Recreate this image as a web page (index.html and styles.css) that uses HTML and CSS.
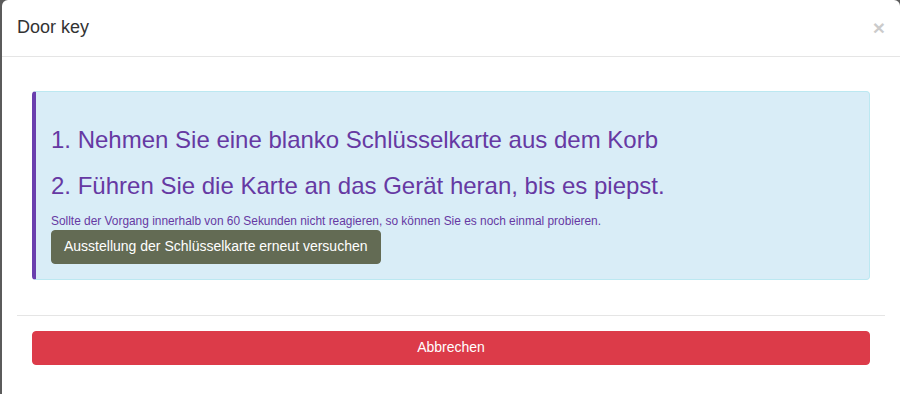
FILE: index.html
```html
<!DOCTYPE html>
<html lang="de">
<head>
<meta charset="utf-8">
<title>Door key</title>
<link rel="stylesheet" href="styles.css">
</head>
<body>
<div class="modal">
  <div class="modal-header">
    <button class="close" type="button" aria-label="Close">×</button>
    <h4 class="modal-title">Door key</h4>
  </div>
  <div class="modal-body">
    <div class="panel">
      <div class="alert">
        <h3 class="step">1. Nehmen Sie eine blanko Schlüsselkarte aus dem Korb</h3>
        <h3 class="step">2. Führen Sie die Karte an das Gerät heran, bis es piepst.</h3>
        <p class="hint"><small>Sollte der Vorgang innerhalb von 60 Sekunden nicht reagieren, so können Sie es noch einmal probieren.</small></p>
        <button class="btn btn-retry" type="button">Ausstellung der Schlüsselkarte erneut versuchen</button>
      </div>
    </div>
    <div class="separator"></div>
    <div class="actions">
      <button class="btn btn-cancel" type="button">Abbrechen</button>
    </div>
  </div>
</div>
</body>
</html>
```
FILE: styles.css
```css
html, body {
  margin: 0;
  padding: 0;
  height: 394px;
  overflow: hidden;
}
body {
  background: #5b5b5b;
  font-family: "Liberation Sans", Arial, sans-serif;
  font-size: 14px;
  line-height: 1.42857;
  color: #333;
}
.modal {
  margin-left: 2px;
  width: 898px;
  height: 420px;
  background: #fff;
  border-radius: 6px;
}
.modal-header {
  padding: 15px;
  border-bottom: 1px solid #e5e5e5;
}
.modal-title {
  margin: 0;
  font-size: 18px;
  font-weight: 500;
  line-height: 1.42857;
  color: #333;
}
.close {
  float: right;
  margin-top: 2px;
  padding: 0;
  border: 0;
  background: transparent;
  font-family: "Liberation Sans", Arial, sans-serif;
  font-size: 21px;
  font-weight: bold;
  line-height: 1;
  color: #000;
  opacity: 0.2;
}
.modal-body {
  padding: 15px;
}
.panel {
  padding: 19px 15px 0;
}
.alert {
  background: #d9edf7;
  border: 1px solid #bce8f1;
  border-left: 4px solid #6a3fae;
  border-radius: 4px;
  padding: 15px;
  color: #6639a3;
}
.step {
  margin: 20px 0 10px;
  font-size: 24px;
  font-weight: 500;
  line-height: 1.1;
}
.hint {
  margin: 0;
  padding-top: 3px;
  line-height: 17px;
}
.hint small {
  font-size: 85%;
}
.btn {
  display: inline-block;
  padding: 6px 12px;
  border: 1px solid transparent;
  border-radius: 4px;
  font-family: "Liberation Sans", Arial, sans-serif;
  font-size: 14px;
  line-height: 1.42857;
  color: #fff;
  cursor: pointer;
}
.btn-retry {
  background: #636b54;
  border-color: #636b54;
}
.separator {
  margin-top: 35px;
  border-top: 1px solid #e5e5e5;
}
.actions {
  padding: 15px 15px 0;
}
.btn-cancel {
  display: block;
  width: 100%;
  background: #dc3b49;
  border-color: #dc3b49;
}
```
